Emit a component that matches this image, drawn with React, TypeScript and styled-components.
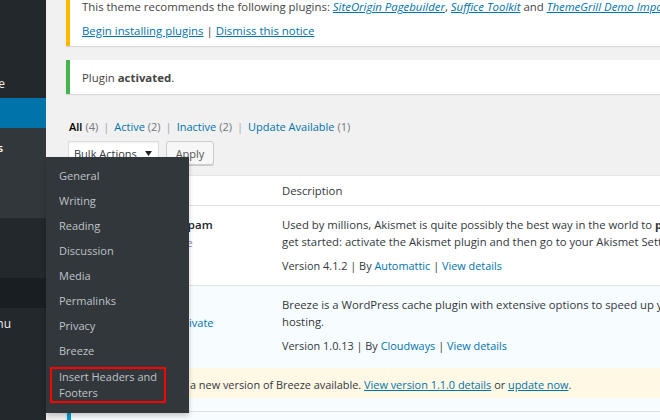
import styled, { createGlobalStyle } from "styled-components";

const GlobalStyle = createGlobalStyle`
  html, body {
    margin: 0;
    padding: 0;
    background: #f1f1f1;
    overflow: hidden;
  }
  body {
    font-family: "Open Sans", "Noto Sans", sans-serif;
    font-size: 11.3px;
    color: #444;
  }
  * { box-sizing: border-box; }
`;

const Page = styled.div`
  position: relative;
  display: flex;
  width: 660px;
  height: 420px;
  overflow: hidden;
  background: #f1f1f1;
`;

/* ---------- admin sidebar (scrolled so only its right edge shows) ---------- */

const Sidebar = styled.nav`
  flex: 0 0 46px;
  background: #23282d;
  overflow: hidden;
  padding-top: 8px;
`;

const MenuItem = styled.div<{ $state?: "current" | "hover"; $cut: number }>`
  position: relative;
  height: 30px;
  display: flex;
  align-items: center;
  justify-content: flex-end;
  padding-right: ${(p) => p.$cut}px;
  white-space: nowrap;
  font-size: 12px;
  color: #eee;
  background: ${(p) =>
    p.$state === "current" ? "#0073aa" : p.$state === "hover" ? "#191e23" : "transparent"};

  span { flex-shrink: 0; }

  ${(p) =>
    p.$state &&
    `
    &::after {
      content: "";
      position: absolute;
      right: 0;
      top: 50%;
      margin-top: ${p.$state === "current" ? -8 : -6}px;
      border: ${p.$state === "current" ? 8 : 6}px solid transparent;
      border-right-color: ${p.$state === "current" ? "#f1f1f1" : "#32373c"};
      border-left-width: 0;
      border-right-width: ${p.$state === "current" ? 7 : 6}px;
    }
  `}
`;

const SubMenu = styled.div`
  background: #32373c;
  padding: 7px 0 8px;
`;

const SubItem = styled.div<{ $current?: boolean; $cut: number }>`
  height: 25px;
  display: flex;
  align-items: center;
  justify-content: flex-end;
  padding-right: ${(p) => p.$cut}px;
  white-space: nowrap;
  font-size: 11px;
  color: ${(p) => (p.$current ? "#fff" : "#b4b9be")};
  font-weight: ${(p) => (p.$current ? 600 : 400)};

  span { flex-shrink: 0; }
`;

/* ---------- settings flyout ---------- */

const Flyout = styled.div`
  position: absolute;
  left: 46px;
  top: 157px;
  width: 143px;
  background: #32373c;
  box-shadow: 0 3px 5px rgba(0, 0, 0, 0.2);
  padding: 6px 0 10px;
  z-index: 5;
`;

const FlyItem = styled.div`
  padding: 0 13px;
  height: 25px;
  line-height: 25px;
  font-size: 11px;
  color: #bfc3c7;
  white-space: nowrap;
`;

const Marked = styled.div`
  margin: 4px 0 0 4px;
  width: 116px;
  border: 2px solid #f00;
  padding: 0 4px 0 7px;
  font-size: 11px;
  line-height: 16px;
  color: #bfc3c7;
`;

/* ---------- main area ---------- */

const Main = styled.main`
  flex: 1;
  min-width: 0;
  padding-left: 20px;
  overflow: hidden;
`;

const Wrap = styled.div`
  width: 860px;
`;

const Notice = styled.div<{ $tone: "warning" | "success" }>`
  background: #fff;
  border-left: 4px solid ${(p) => (p.$tone === "warning" ? "#ffb900" : "#46b450")};
  box-shadow: 0 1px 1px rgba(0, 0, 0, 0.1);
  padding: ${(p) => (p.$tone === "warning" ? "2px 12px 6px" : "9px 12px 7px")};
  margin-top: ${(p) => (p.$tone === "warning" ? "-4px" : "14px")};
  font-size: 11.4px;
  line-height: 18px;
  color: #444;
  white-space: nowrap;

  p { margin: 0; }
  p + p { margin-top: 6px; }
`;

const Link = styled.a<{ $em?: boolean; $line?: boolean }>`
  color: #0073aa;
  text-decoration: ${(p) => (p.$line ? "underline" : "none")};
  font-style: ${(p) => (p.$em ? "italic" : "normal")};
`;

const Filters = styled.ul`
  list-style: none;
  margin: 24px 0 0;
  padding: 0 0 0 3px;
  display: flex;
  gap: 5px;
  line-height: 18px;
  font-size: 11px;
  color: #666;
`;

const Filter = styled.li<{ $current?: boolean }>`
  display: flex;
  gap: 3px;
  a {
    color: ${(p) => (p.$current ? "#000" : "#0073aa")};
    font-weight: ${(p) => (p.$current ? 600 : 400)};
    text-decoration: none;
  }
  em { font-style: normal; color: #72777c; }
`;

const Sep = styled.span`
  color: #a0a5aa;
`;

const Actions = styled.div`
  display: flex;
  gap: 7px;
  margin-top: 5px;
  padding-left: 2px;
`;

const Select = styled.div`
  width: 91px;
  height: 24px;
  background: #fff;
  border: 1px solid #ddd;
  box-shadow: inset 0 1px 2px rgba(0, 0, 0, 0.07);
  display: flex;
  align-items: center;
  justify-content: space-between;
  padding: 0 6px 0 5px;
  color: #32373c;
  font-size: 11px;
`;

const Button = styled.button`
  height: 24px;
  width: 48px;
  background: #f7f7f7;
  border: 1px solid #ccc;
  border-radius: 3px;
  box-shadow: 0 1px 0 #ccc;
  color: #555;
  font-family: inherit;
  font-size: 11px;
  padding: 0;
`;

/* ---------- plugins table ---------- */

const Table = styled.div`
  margin-top: 10px;
  background: #fff;
  border: 1px solid #e5e5e5;
  box-shadow: 0 1px 1px rgba(0, 0, 0, 0.04);
`;

const cols = "30px 175px 1fr";

const HeadRow = styled.div`
  display: grid;
  grid-template-columns: ${cols};
  height: 30px;
  align-items: center;
  border-bottom: 1px solid #e1e1e1;
  color: #32373c;
  font-size: 11.3px;
  div { padding-left: 10px; }
`;

const Row = styled.div<{ $active?: boolean; $split?: boolean }>`
  display: grid;
  grid-template-columns: ${cols};
  background: ${(p) => (p.$active ? "#f7fcfe" : "#fff")};
  border-bottom: ${(p) => (p.$split ? "none" : "1px solid #e1e1e1")};
  padding: 10px 0 ${(p) => (p.$split ? 0 : 11)}px;
`;

const Check = styled.div<{ $active?: boolean }>`
  border-left: 4px solid ${(p) => (p.$active ? "#00a0d2" : "transparent")};
  margin: -10px 0 -11px;
`;

const NameCell = styled.div`
  padding-left: 10px;
  strong {
    display: block;
    font-size: 11.5px;
    font-weight: 600;
    line-height: 18px;
    color: #23282d;
  }
`;

const RowActions = styled.div`
  font-size: 11px;
  line-height: 18px;
  color: #ddd;
  a { text-decoration: none; color: #0073aa; }
  a.delete { color: #8a74c9; }
`;

const DescCell = styled.div`
  padding-left: 10px;
  font-size: 11.3px;
  line-height: 17px;
  color: #32373c;
  white-space: nowrap;
  p { margin: 0; }
`;

const Meta = styled.div`
  margin-top: 7px;
  font-size: 10.9px;
  a { color: #0073aa; text-decoration: none; }
`;

const UpdateRow = styled.div`
  display: grid;
  grid-template-columns: ${cols};
  background: #f7fcfe;
  border-bottom: 1px solid #e1e1e1;
  padding: 14px 0 13px;
`;

const UpdateNote = styled.div`
  grid-column: 2 / 4;
  margin-left: 10px;
  height: 30px;
  background: #fff8e5;
  display: flex;
  align-items: center;
  padding: 3px 0 0 40px;
  white-space: nowrap;
  font-size: 10.9px;
  color: #32373c;
`;

const DropArrow = () => (
  <svg width="7" height="5" viewBox="0 0 7 5">
    <path d="M0 0h7L3.5 5z" fill="#222" />
  </svg>
);

export default function App() {
  return (
    <>
      <GlobalStyle />
      <Page>
        <Sidebar>
          <MenuItem $cut={60}><span>Pages</span></MenuItem>
          <MenuItem $cut={60}><span>Comments</span></MenuItem>
          <MenuItem $cut={41}><span>Appearance</span></MenuItem>
          <MenuItem $state="current" $cut={60}><span>Plugins</span></MenuItem>
          <SubMenu>
            <SubItem $current $cut={43}><span>Installed Plugins</span></SubItem>
            <SubItem $cut={60}><span>Add New</span></SubItem>
            <SubItem $cut={60}><span>Editor</span></SubItem>
          </SubMenu>
          <MenuItem $cut={60}><span>Users</span></MenuItem>
          <MenuItem $cut={60}><span>Tools</span></MenuItem>
          <MenuItem $state="hover" $cut={60}><span>Settings</span></MenuItem>
          <MenuItem $cut={35}><span>Collapse menu</span></MenuItem>
        </Sidebar>

        <Main>
          <Wrap>
            <Notice $tone="warning">
              <p>
                This theme recommends the following plugins:{" "}
                <Link $em $line>SiteOrigin Pagebuilder</Link>,{" "}
                <Link $em $line>Suffice Toolkit</Link> and{" "}
                <Link $em $line>ThemeGrill Demo Importer</Link>.
              </p>
              <p>
                <Link $line>Begin installing plugins</Link> | <Link $line>Dismiss this notice</Link>
              </p>
            </Notice>

            <Notice $tone="success">
              Plugin <strong>activated</strong>.
            </Notice>

            <Filters>
              <Filter $current><a>All</a><em>(4)</em></Filter>
              <Sep>|</Sep>
              <Filter><a>Active</a><em>(2)</em></Filter>
              <Sep>|</Sep>
              <Filter><a>Inactive</a><em>(2)</em></Filter>
              <Sep>|</Sep>
              <Filter><a>Update Available</a><em>(1)</em></Filter>
            </Filters>

            <Actions>
              <Select>
                Bulk Actions <DropArrow />
              </Select>
              <Button>Apply</Button>
            </Actions>

            <Table>
              <HeadRow>
                <span />
                <div>Plugin</div>
                <div>Description</div>
              </HeadRow>

              <Row>
                <Check />
                <NameCell>
                  <strong>Akismet Anti-Spam</strong>
                  <RowActions>
                    <a>Activate</a> | <a className="delete">Delete</a>
                  </RowActions>
                </NameCell>
                <DescCell>
                  <p>
                    Used by millions, Akismet is quite possibly the best way in the world to{" "}
                    <strong>protect your blog from spam</strong>. It keeps your site protected even while you sleep. To
                  </p>
                  <p>get started: activate the Akismet plugin and then go to your Akismet Settings page to set up your API key.</p>
                  <Meta>
                    Version 4.1.2 | By <a>Automattic</a> | <a>View details</a>
                  </Meta>
                </DescCell>
              </Row>

              <Row $active $split>
                <Check $active />
                <NameCell>
                  <strong>Breeze</strong>
                  <RowActions>
                    <a>Settings</a> | <a>Deactivate</a>
                  </RowActions>
                </NameCell>
                <DescCell>
                  <p>
                    Breeze is a WordPress cache plugin with extensive options to speed up your website. All the
                    options including Varnish Cache are compatible with Cloudways
                  </p>
                  <p>hosting.</p>
                  <Meta>
                    Version 1.0.13 | By <a>Cloudways</a> | <a>View details</a>
                  </Meta>
                </DescCell>
              </Row>
              <UpdateRow>
                <Check $active />
                <UpdateNote>
                  There is a new version of Breeze available.&nbsp;
                  <Link $line>View version 1.1.0 details</Link>&nbsp;or&nbsp;<Link $line>update now</Link>.
                </UpdateNote>
              </UpdateRow>

              <Row $active>
                <Check $active />
                <NameCell>
                  <strong>Insert Headers and Footers</strong>
                </NameCell>
                <DescCell>
                  <p>Quick and easy way to insert scripts in your WordPress header and footer.</p>
                </DescCell>
              </Row>
            </Table>
          </Wrap>
        </Main>

        <Flyout>
          <FlyItem>General</FlyItem>
          <FlyItem>Writing</FlyItem>
          <FlyItem>Reading</FlyItem>
          <FlyItem>Discussion</FlyItem>
          <FlyItem>Media</FlyItem>
          <FlyItem>Permalinks</FlyItem>
          <FlyItem>Privacy</FlyItem>
          <FlyItem>Breeze</FlyItem>
          <Marked>Insert Headers and Footers</Marked>
        </Flyout>
      </Page>
    </>
  );
}
